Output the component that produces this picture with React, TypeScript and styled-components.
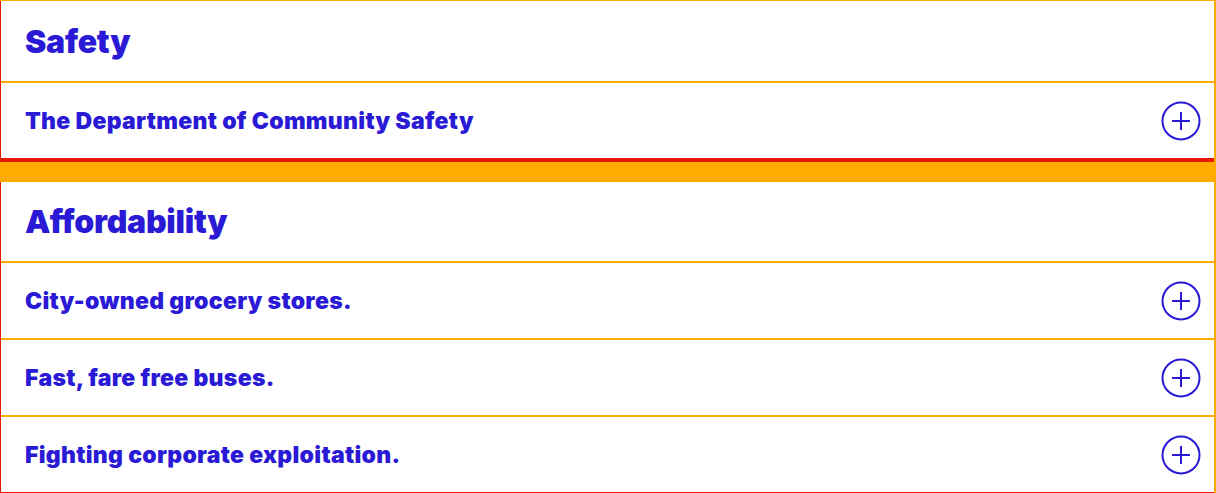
import React from "react";
import styled, { createGlobalStyle } from "styled-components";

const Global = createGlobalStyle`
  html, body { margin: 0; padding: 0; background: #ffab00; }
  body { font-family: Inter, "Liberation Sans", sans-serif; }
`;

const Page = styled.div`
  display: flex;
  flex-direction: column;
  gap: 20px;
  padding-top: 1px;
`;

const Card = styled.section`
  width: 1213px;
  background: #ffffff;
  border-left: 1px solid #e51a00;
  border-bottom: 4px solid #e51a00;
  display: flex;
  flex-direction: column;
`;

const Title = styled.h2<{ $h: number }>`
  margin: 0;
  height: ${(p) => p.$h}px;
  display: flex;
  align-items: center;
  padding-left: 24px;
  font-family: Inter, "Liberation Sans", sans-serif;
  font-weight: 900;
  font-size: 32px;
  letter-spacing: -0.25px;
  color: #2a1ad6;
  border-bottom: 2px solid #ffab00;
`;

const Row = styled.div<{ $last?: boolean }>`
  height: 75px;
  display: flex;
  align-items: center;
  justify-content: space-between;
  padding: 0 13px 0 24px;
  border-bottom: ${(p) => (p.$last ? "none" : "2px solid #ffab00")};
`;

const RowLabel = styled.span`
  font-family: Inter, "Liberation Sans", sans-serif;
  font-weight: 900;
  font-size: 23px;
  letter-spacing: 0.3px;
  color: #2a1ad6;
`;

const PlusButton = styled.button`
  width: 40px;
  height: 40px;
  padding: 0;
  border: none;
  background: transparent;
  display: flex;
  align-items: center;
  justify-content: center;
  cursor: pointer;
`;

const PlusIcon = () => (
  <svg width="40" height="40" viewBox="0 0 40 40" fill="none">
    <circle cx="20" cy="20" r="18.5" stroke="#2a1ad6" strokeWidth="2" />
    <path d="M11 20h18M20 11v18" stroke="#2a1ad6" strokeWidth="2" />
  </svg>
);

const sections = [
  { title: "Safety", h: 80, items: ["The Department of Community Safety"] },
  {
    title: "Affordability",
    h: 79,
    items: [
      "City-owned grocery stores.",
      "Fast, fare free buses.",
      "Fighting corporate exploitation.",
    ],
  },
];

export default function App() {
  return (
    <>
      <Global />
      <Page>
        {sections.map((s) => (
          <Card key={s.title}>
            <Title $h={s.h}>{s.title}</Title>
            {s.items.map((it, i) => (
              <Row key={it} $last={i === s.items.length - 1}>
                <RowLabel>{it}</RowLabel>
                <PlusButton aria-label="Expand">
                  <PlusIcon />
                </PlusButton>
              </Row>
            ))}
          </Card>
        ))}
      </Page>
    </>
  );
}
